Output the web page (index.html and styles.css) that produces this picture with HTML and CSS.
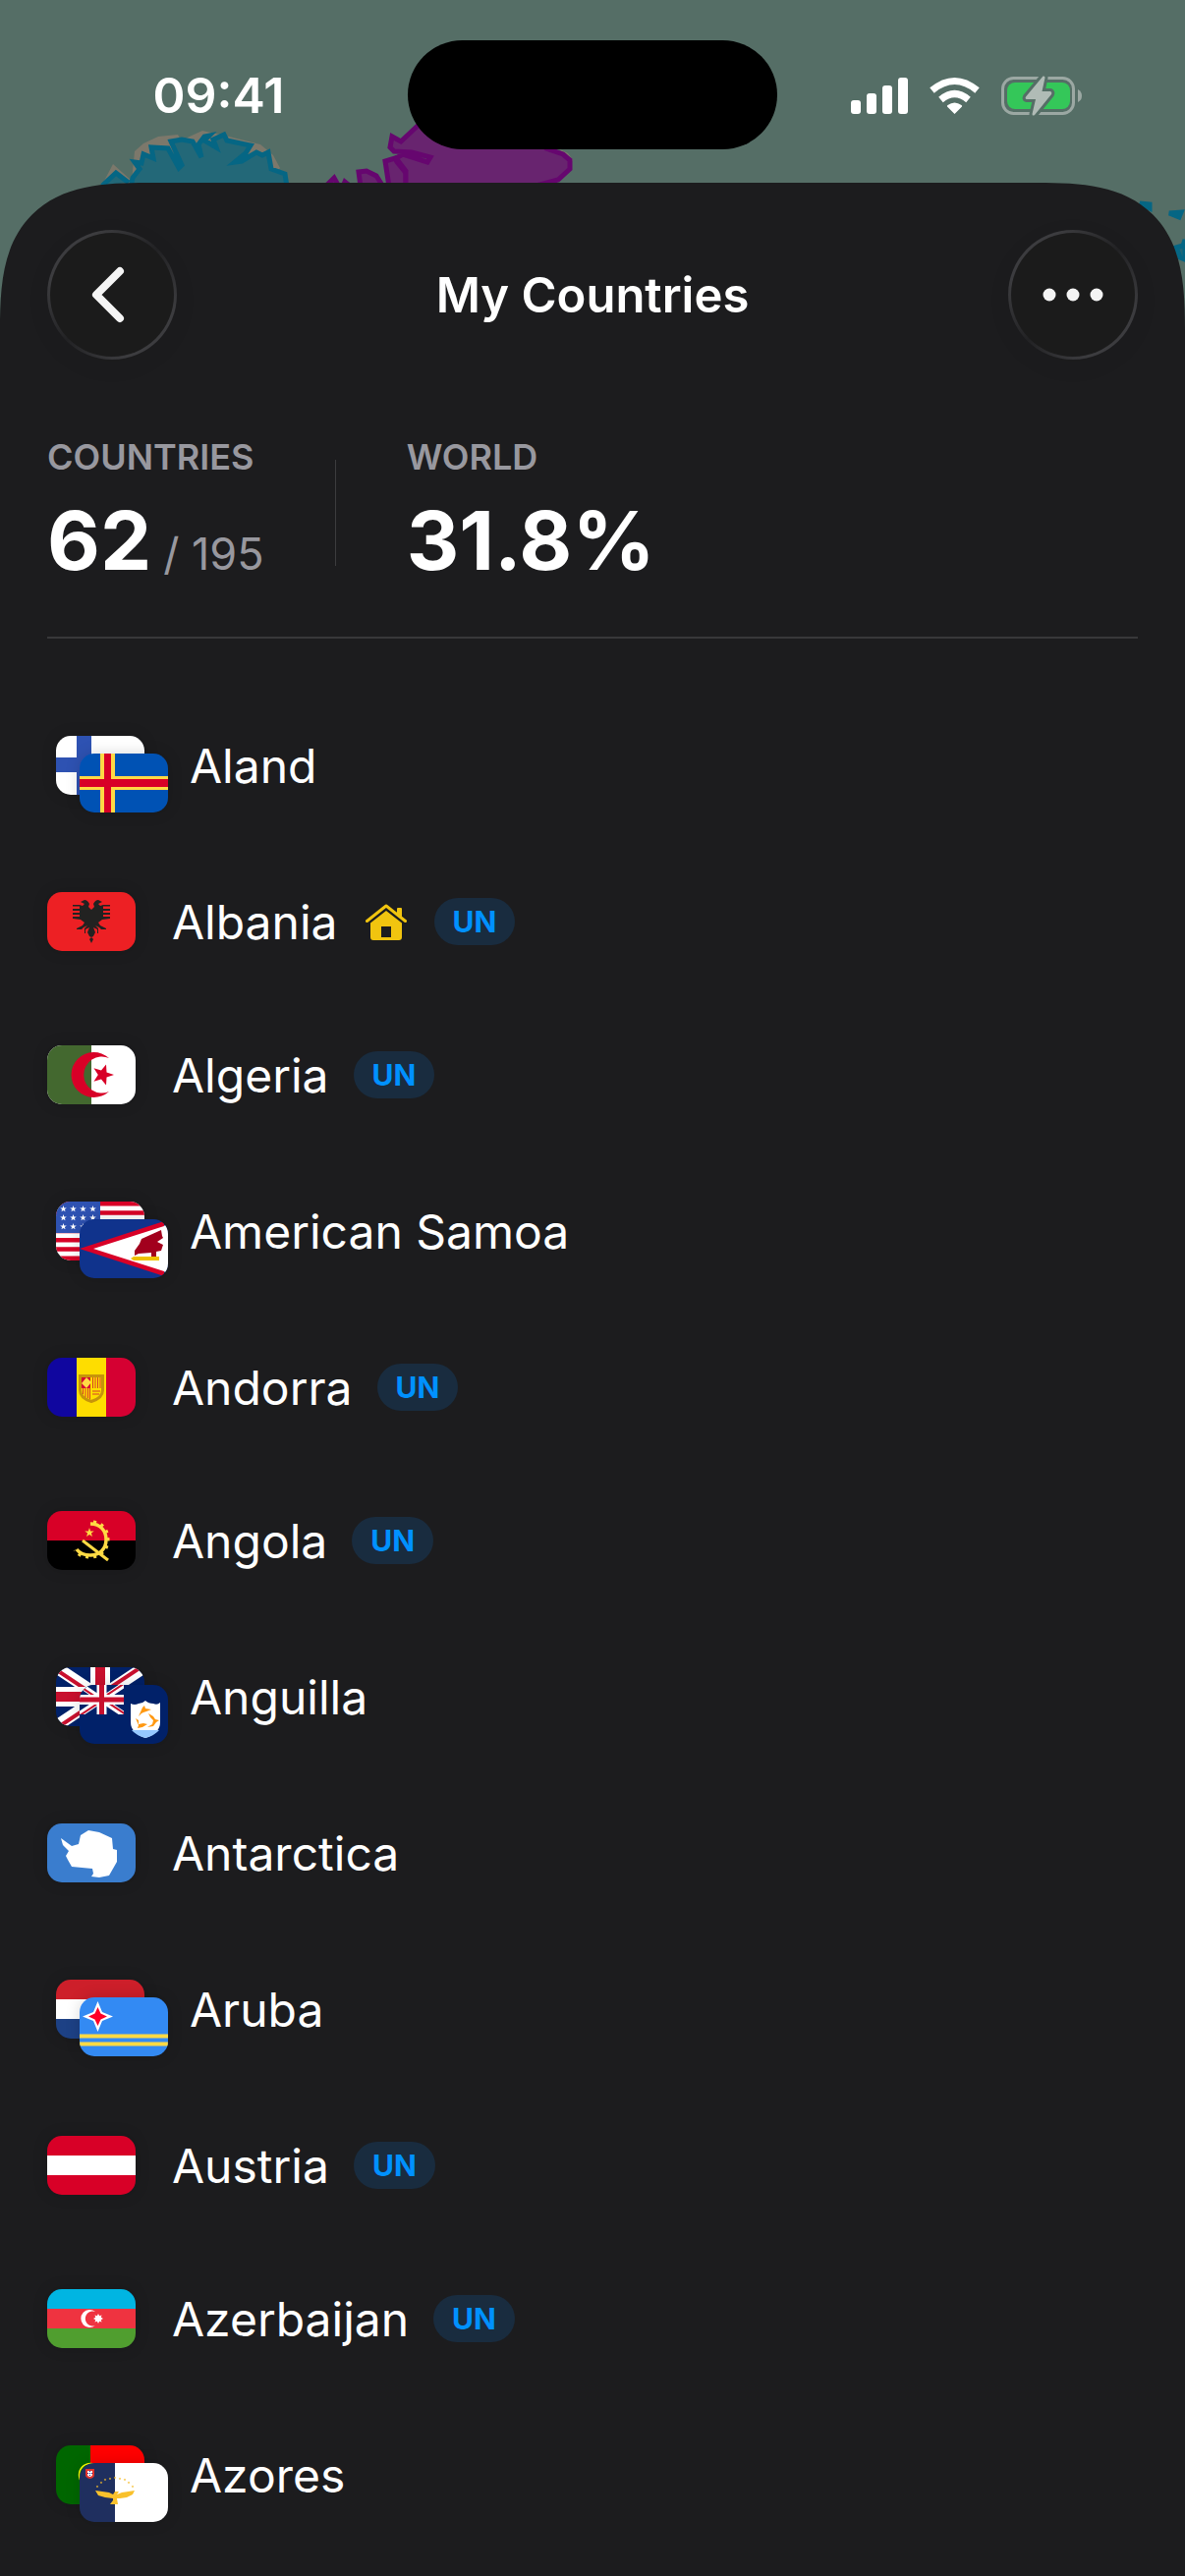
FILE: index.html
```html
<!DOCTYPE html>
<html lang="en">
<head>
<meta charset="utf-8">
<meta name="viewport" content="width=device-width, initial-scale=1">
<title>My Countries</title>
<link rel="stylesheet" href="styles.css">
</head>
<body>
<svg width="0" height="0" class="defs" aria-hidden="true">
  <defs>
    <clipPath id="jack-box"><path d="M0 0H90V60H0z"/></clipPath>
    <clipPath id="jack-saltire"><path d="M45 30H90V60zM45 30V60H0zM45 30H0V0zM45 30V0H90z"/></clipPath>
    <symbol id="jack" viewBox="0 0 90 60" preserveAspectRatio="none">
      <g clip-path="url(#jack-box)">
        <path fill="#012169" d="M0 0H90V60H0z"/>
        <path stroke="#fff" stroke-width="12" d="M0 0L90 60M90 0L0 60"/>
        <path stroke="#c8102e" stroke-width="8" clip-path="url(#jack-saltire)" d="M0 0L90 60M90 0L0 60"/>
        <path stroke="#fff" stroke-width="20" d="M45 0V60M0 30H90"/>
        <path stroke="#c8102e" stroke-width="10" d="M45 0V60M0 30H90"/>
      </g>
    </symbol>
    <symbol id="star" viewBox="-10 -10 20 20"><path fill="currentColor" d="M0-10L2.3-3.2L9.5-3.1L3.8 1.2L5.9 8.1L0 4L-5.9 8.1L-3.8 1.2L-9.5-3.1L-2.3-3.2z"/></symbol>
  </defs>
</svg>

<svg class="map" viewBox="0 0 1206 400" aria-hidden="true">
  <path fill="#7c786b" d="M104 188L115 167L134 184L137 154L146 146L161 139L181 137L184 143L206 133L233 139L265 147L278 158L285 171L270 190z"/>
  <g fill="#236878" stroke="#056684" stroke-width="5">
    <path d="M104 189L118 176L131 186"/>
    <path d="M133 191L135 181L142 172L137 165L144 166L146 157L156 161L154 150L171 151L182 171L185 168L174 144L185 142L196 144L205 160L202 147L208 139L213 138L208 143L220 150L217 142L228 137L231 143L255 148L250 156L239 165L246 164L261 155L267 158L273 155L276 172L290 177L292 190"/>
    <path d="M1160 207L1170 208L1170 212zM1190 217L1202 216L1200 221zM1197 252L1204 250L1206 244V264L1201 262z"/>
  </g>
  <path fill="#7c786b" d="M570 152L578 156L583 163L578 168z"/>
  <g fill="#68246f" stroke="#66066f" stroke-width="5">
    <path d="M331 190L340 181L345 190M349 190L351 185L357 190M367 190L365 175L373 174L383 179L390 190"/>
    <path d="M396 190L392 164L402 161L404 165L413 176L413 190z"/>
    <path d="M425 128L408 144L399 139L397 150L401 154L419 155L438 160L435 165L410 157L403 161L413 174L413 190H542L568 183L580 172L580 163L573 157L556 151L520 110z"/>
  </g>
</svg>

<header class="status">
  <time class="clock">09:41</time>
  <div class="island"></div>
  <svg class="indicators" width="236" height="42" viewBox="865 76 236 42" role="img" aria-label="Signal, Wi-Fi, charging">
    <g fill="#fff">
      <rect x="865" y="102" width="10" height="14" rx="3"/>
      <rect x="881" y="95" width="10" height="21" rx="3"/>
      <rect x="897" y="87" width="10" height="29" rx="3"/>
      <rect x="913" y="79" width="10" height="37" rx="3"/>
      <path d="M970.500 116L963 108.500Q962.500 107.500 963.500 107Q970.500 102 977.500 107Q978.500 107.500 978 108.500z"/>
    </g>
    <g fill="none" stroke="#fff" stroke-width="7">
      <path d="M956.500 101.500Q970.500 89.500 984.500 101.500"/>
      <path d="M947.500 92Q970.500 73 993.500 92"/>
    </g>
    <rect x="1019.500" y="79.500" width="72" height="36" rx="11" fill="none" stroke="#9ba8a3" stroke-width="3"/>
    <path fill="#9ba8a3" d="M1096 91Q1100 93 1100 97.500Q1100 102 1096 104z"/>
    <rect x="1024" y="84" width="64" height="27" rx="8" fill="#34c759"/>
    <path fill="#b0bbb6" stroke="#556e66" stroke-width="6" stroke-linejoin="round" paint-order="stroke" d="M1060.500 77.500Q1062.500 77 1062.500 79L1059.500 93H1068Q1070 94 1069 96L1052 117Q1049.500 118.500 1049.500 116L1053 101H1043.500Q1042 100.500 1043 98.500z"/>
  </svg>
</header>

<main class="sheet">
  <div class="titlebar">
    <button class="round" type="button" aria-label="Back">
      <svg width="40" height="64" viewBox="0 0 40 64"><path d="M32 8L8 32L32 56" fill="none" stroke="#f4f4f4" stroke-width="8" stroke-linecap="round" stroke-linejoin="round"/></svg>
    </button>
    <h1>My Countries</h1>
    <button class="round" type="button" aria-label="More">
      <svg width="64" height="16" viewBox="0 0 64 16" fill="#f4f4f4"><circle cx="8" cy="8" r="6.500"/><circle cx="32" cy="8" r="6.500"/><circle cx="56" cy="8" r="6.500"/></svg>
    </button>
  </div>

  <dl class="stats">
    <div class="stat"><dt>COUNTRIES</dt><dd>62<small>/ 195</small></dd></div>
    <div class="rule"></div>
    <div class="stat"><dt>WORLD</dt><dd>31.8%</dd></div>
  </dl>

  <ul class="countries">
    <li class="territory">
      <div class="pair">
        <svg class="flag" viewBox="0 0 90 60"><path fill="#fff" d="M0 0H90V60H0z"/><path fill="#2e52b2" d="M21 0H36V22H90V37H36V60H21V37H0V22H21z"/></svg>
        <svg class="flag" viewBox="0 0 90 60"><path fill="#0052b4" d="M0 0H90V60H0z"/><path fill="#ffda44" d="M21 0H36V23H90V37H36V60H21V37H0V23H21z"/><path fill="#d80027" d="M25 0H32V26H90V34H32V60H25V34H0V26H25z"/></svg>
      </div>
      <span class="name">Aland</span>
    </li>
    <li>
      <svg class="flag" viewBox="0 0 90 60"><path fill="#ed2024" d="M0 0H90V60H0z"/><path fill="#222221" d="M45 18L42 15L43 12Q41 8 38 8L34 10L38 12L36 14L33 13V16L37 18H41V18L37 17L33 13H26V14.500H33V17H26V19H33V21H26V23H33V25H26V27L34 28L38 31L36 34L30 37V38H35L37 36L41 34L38 37V42H39V38L43 36L41 41L43 45L45 46L43 48L45 52L47 48L45 46L47 45L49 41L47 36L51 38V42H52V37L49 34L53 36L55 38H60V37L54 34L52 31L56 28L64 27V25H57V23H64V21H57V19H64V17H57V14.500H64V13H57L53 17L49 18L53 18L57 16V13L54 14L52 12L56 10L52 8Q49 8 47 12L48 15z"/></svg>
      <span class="name">Albania</span>
      <svg class="home" width="42" height="38" viewBox="0 0 42 38" role="img" aria-label="Home country"><path fill="none" stroke="#f1c40f" stroke-width="3" stroke-linecap="round" stroke-linejoin="round" d="M1.500 17.500L21 2L40.500 17.500"/><path fill="#f1c40f" d="M32 5Q32 4 33 4H36Q37 4 37 5V14L32 10zM5 19.500L21 7L37 19.500V34Q37 37 34 37H8Q5 37 5 34zM16 23V34H26V23z" fill-rule="evenodd"/></svg>
      <span class="badge">UN</span>
    </li>
    <li>
      <svg class="flag" viewBox="0 0 90 60"><path fill="#fff" d="M0 0H90V60H0z"/><path fill="#43682f" d="M0 0H45V60H0z"/><path fill="#d80027" d="M63 13A23 23 0 1 0 63 47A18.500 18.500 0 1 1 63 13zM68 30L60.500 32.600L60 40.600L55 34.400L47.500 36.700L51.800 30L47.500 23.300L55 25.600L60 19.400L60.500 27.400z"/></svg>
      <span class="name">Algeria</span>
      <span class="badge">UN</span>
    </li>
    <li class="territory">
      <div class="pair">
        <svg class="flag" viewBox="0 0 90 60"><path fill="#fff" d="M0 0H90V60H0z"/><path fill="none" stroke="#d80027" stroke-width="4.600" d="M0 2.300H90M0 11.500H90M0 20.800H90M0 30H90M0 39.200H90M0 48.500H90M0 57.700H90"/><path fill="#2e52b2" d="M0 0H45V32H0z"/>
          <g color="#fff"><use href="#star" x="4" y="4" width="7" height="7"/><use href="#star" x="14" y="4" width="7" height="7"/><use href="#star" x="24" y="4" width="7" height="7"/><use href="#star" x="34" y="4" width="7" height="7"/><use href="#star" x="4" y="13" width="7" height="7"/><use href="#star" x="14" y="13" width="7" height="7"/><use href="#star" x="24" y="13" width="7" height="7"/><use href="#star" x="34" y="13" width="7" height="7"/><use href="#star" x="4" y="22" width="7" height="7"/><use href="#star" x="14" y="22" width="7" height="7"/><use href="#star" x="24" y="22" width="7" height="7"/></g></svg>
        <svg class="flag" viewBox="0 0 90 60"><path fill="#10338c" d="M0 0H90V60H0z"/><path fill="#d80027" d="M0 30L86 2V58z"/><path fill="#fff" d="M14 30L86 7L90 3V57L86 53z"/><path fill="#a2001d" d="M56 37V32L61 25L63 20L83 11L84 17L85 19L79 23L85 26L83 32L78 33V38H73V34L60 35z"/><path fill="#efc100" d="M52 40L55 38H81V42H55z"/></svg>
      </div>
      <span class="name">American Samoa</span>
    </li>
    <li>
      <svg class="flag" viewBox="0 0 90 60"><path fill="#10069f" d="M0 0H30V60H0z"/><path fill="#fedd00" d="M30 0H60V60H30z"/><path fill="#d50032" d="M60 0H90V60H60z"/><path fill="#fedd00" stroke="#c6940a" stroke-width="3" d="M33.500 18.500H56.500V33Q56.500 41 45 44.500Q33.500 41 33.500 33z"/><path fill="#d50032" d="M35 20H44V31H35z"/><path fill="#ffda44" d="M40 20L45 25L40 31L35 26z"/><path fill="none" stroke="#d5402a" stroke-width="1" d="M46.500 20V31M49 20V31M51.500 20V31M54 20V31M36.500 31V37M39 31V40M41.500 31V41M43.500 31V42M46 34H54M46 37H53"/></svg>
      <span class="name">Andorra</span>
      <span class="badge">UN</span>
    </li>
    <li>
      <svg class="flag" viewBox="0 0 90 60"><path fill="#d80027" d="M0 0H90V30H0z"/><path d="M0 30H90V60H0z"/><g fill="none" stroke="#ffda44"><path stroke-width="3.500" d="M44 13C54 13 60 20 60 29C60 39 53 45 44 45C38 45 33 43 30 39"/><path stroke-width="3" stroke-dasharray="3 5" d="M47 11C57 12 62 20 62 29C62 40 54 47 44 47C37 47 31 45 28 40"/><path stroke-width="3" d="M36 30L62 50"/></g><use href="#star" color="#ffda44" x="38" y="17" width="10" height="10"/></svg>
      <span class="name">Angola</span>
      <span class="badge">UN</span>
    </li>
    <li class="territory">
      <div class="pair">
        <svg class="flag" viewBox="0 0 90 60"><use href="#jack" width="90" height="60"/></svg>
        <svg class="flag" viewBox="0 0 90 60"><path fill="#012169" d="M0 0H90V60H0z"/><use href="#jack" width="45" height="30"/><path fill="#fff" d="M52 19Q56 21 60 19Q64 19 67 16Q70 19 75 19Q79 21 82 18V38Q82 49 67 54Q52 49 52 38z"/><path fill="#96c8ff" d="M53 46H81Q77 51 67 54Q57 51 53 46z"/><path fill="#ff9811" d="M60 32L64 23L66 21L67 24L73 25L68 27L65 28L63 29zM57 34L60 36L60 40L65 39L69 40L64 43L59 44L60 41zM70 29L75 32L77 35L81 36L78 38L75 42L69 43L74 40L75 36L72 33z"/></svg>
      </div>
      <span class="name">Anguilla</span>
    </li>
    <li>
      <svg class="flag" viewBox="0 0 90 60"><path fill="#3a7dce" d="M0 0H90V60H0z"/><path fill="#fff" d="M14 15L25 23L32 21L34 12L42 7L53 9L66 15L67 26L71 27V39L63 53L53 55L45 54L47 51L46 46L25 44L21 37L19 33L22 28L16 22z"/></svg>
      <span class="name">Antarctica</span>
    </li>
    <li class="territory">
      <div class="pair">
        <svg class="flag" viewBox="0 0 90 60"><path fill="#cd1f2a" d="M0 0H90V20H0z"/><path fill="#fff" d="M0 20H90V40H0z"/><path fill="#1d4185" d="M0 40H90V60H0z"/></svg>
        <svg class="flag" viewBox="0 0 90 60"><path fill="#338af3" d="M0 0H90V60H0z"/><path fill="#ffda44" d="M0 37.500H90V41.500H0zM0 45.500H90V49.500H0z"/><path fill="#fff" d="M18.500 4L23 15L34 19.500L23 24L18.500 35L14 24L3 19.500L14 15z"/><path fill="#ff0028" d="M18.500 10L21.500 16.500L28 19.500L21.500 22.500L18.500 29L15.500 22.500L9 19.500L15.500 16.500z"/></svg>
      </div>
      <span class="name">Aruba</span>
    </li>
    <li>
      <svg class="flag" viewBox="0 0 90 60"><path fill="#d80027" d="M0 0H90V60H0z"/><path fill="#fff" d="M0 20H90V40H0z"/></svg>
      <span class="name">Austria</span>
      <span class="badge">UN</span>
    </li>
    <li>
      <svg class="flag" viewBox="0 0 90 60"><path fill="#00b5e2" d="M0 0H90V20H0z"/><path fill="#ef3340" d="M0 20H90V40H0z"/><path fill="#509e2f" d="M0 40H90V60H0z"/><path fill="#fff" d="M49 23A9 9 0 1 0 49 37A7.500 7.500 0 1 1 49 23zM52 25L53.200 27.200L55.500 26.500L54.800 28.800L57 30L54.800 31.200L55.500 33.500L53.200 32.800L52 35L50.800 32.800L48.500 33.500L49.200 31.200L47 30L49.200 28.800L48.500 26.500L50.800 27.200z"/></svg>
      <span class="name">Azerbaijan</span>
      <span class="badge">UN</span>
    </li>
    <li class="territory">
      <div class="pair">
        <svg class="flag" viewBox="0 0 90 60"><path fill="#060" d="M0 0H35V60H0z"/><path fill="red" d="M35 0H90V60H35z"/><circle cx="35" cy="30" r="11.500" fill="none" stroke="#ff0" stroke-width="1.500"/></svg>
        <svg class="flag" viewBox="0 0 90 60"><path fill="#1f2f5f" d="M0 0H36V60H0z"/><path fill="#fff" d="M36 0H90V60H36z"/><path fill="#e0342c" d="M6 6H15V12Q15 15 10.500 16Q6 15 6 12z"/><path fill="#fff" d="M8 8H13V12Q13 13.500 10.500 14Q8 13.500 8 12z"/><path fill="none" stroke="#1f2f9f" stroke-width="1" stroke-dasharray="1 1" d="M10.500 8V14M8 10.500H13"/><g color="#f5bd2a"><use href="#star" x="16.500" y="22.500" width="3" height="3"/><use href="#star" x="20.500" y="18.500" width="3" height="3"/><use href="#star" x="24.500" y="15.500" width="3" height="3"/><use href="#star" x="29.500" y="14.500" width="3" height="3"/><use href="#star" x="34.500" y="13.500" width="3" height="3"/><use href="#star" x="39.500" y="14.500" width="3" height="3"/><use href="#star" x="44.500" y="15.500" width="3" height="3"/><use href="#star" x="48.500" y="18.500" width="3" height="3"/><use href="#star" x="52.500" y="22.500" width="3" height="3"/></g><path fill="#f9c12c" d="M16 28L30 30L34 32L36 29L40 29L38 32L43 30L56 28L54 32L48 35L41 36L38 36L39 42H31L34 38V36L26 35L19 33z"/></svg>
      </div>
      <span class="name">Azores</span>
    </li>
  </ul>
</main>
</body>
</html>
```
FILE: styles.css
```css
* {
  box-sizing: border-box;
}

body {
  margin: 0;
  min-height: 100vh;
  display: flex;
  flex-direction: column;
  background: #556e66;
  color: #fff;
  font-family: Inter, "Liberation Sans", sans-serif;
  font-size: 48px;
}

.defs {
  position: absolute;
}

/* The map lies behind the status bar and the sheet's corners */
.map {
  position: absolute;
  top: 0;
  left: 0;
  width: 100%;
  z-index: -1;
}

.status {
  display: grid;
  grid-template-columns: 1fr 376px 1fr;
  align-items: center;
  justify-items: center;
  padding: 41px 30px 34px;
}

.clock {
  font-size: 50px;
  font-weight: 600;
}

.island {
  width: 100%;
  height: 111px;
  border-radius: 56px;
  background: #000;
}

.sheet {
  flex: 1;
  padding-top: 48px;
  background: #1c1c1e;
  border-radius: 114px 114px 0 0;
}

@supports (corner-shape: squircle) {
  .sheet {
    border-radius: 150px 150px 0 0;
    corner-shape: superellipse(1.5);
  }
}

.titlebar {
  display: flex;
  align-items: center;
  justify-content: space-between;
  padding: 0 48px;
}

.titlebar h1 {
  margin: 0;
  font-size: 49px;
  font-weight: 600;
}

.round {
  display: flex;
  align-items: center;
  justify-content: center;
  width: 132px;
  height: 132px;
  padding: 0;
  border: 3px solid transparent;
  border-radius: 50%;
  background:
    linear-gradient(#1b1b1b, #1b1b1b) padding-box,
    linear-gradient(135deg, #3c3c3f 20%, #222224 50%, #3c3c3f 80%) border-box;
  box-shadow: 0 6px 24px rgba(0, 0, 0, 0.06);
}

.round svg {
  flex: none;
}

.round:first-child svg {
  margin-right: 8px;
}

.stats {
  display: flex;
  align-items: center;
  gap: 72px;
  margin: 77px 48px 49px;
  padding-bottom: 48px;
  border-bottom: 2px solid #38383a;
}

.stat {
  display: grid;
  gap: 13px;
}

.stat dt {
  color: #98989f;
  font-size: 36px;
  font-weight: 600;
  line-height: 44px;
}

.stat dd {
  margin: 0;
  font-size: 83px;
  font-weight: 700;
  line-height: 100px;
  white-space: nowrap;
}

.stat small {
  margin-left: 12px;
  color: #98989f;
  font-size: 45px;
  font-weight: 400;
  line-height: 1;
}

.rule {
  width: 1px;
  height: 108px;
  background: #3c3c3e;
}

.countries {
  margin: 0;
  padding: 0;
  list-style: none;
}

.countries li {
  display: flex;
  align-items: flex-start;
  padding: 47px 48px;
}

.countries .territory {
  padding: 50px 57px 34px;
}

.flag {
  display: block;
  flex: none;
  width: 90px;
  height: 60px;
  border-radius: 15px;
  box-shadow: 0 0 15px rgba(0, 0, 0, 0.15);
}

/* The territory's flag overlaps that of its sovereign state */
.pair {
  display: grid;
  grid-template: 18px 60px / 24px 90px;
}

.pair .flag:first-child {
  grid-area: 1 / 1;
}

.pair .flag:last-child {
  grid-area: 2 / 2;
}

.name {
  margin-left: 37px;
  line-height: 62px;
}

.territory .name {
  margin-left: 22px;
}

.home {
  margin: 12px 3px 0 28px;
}

.badge {
  margin: 6px 0 0 25px;
  padding: 0 19px;
  border-radius: 24px;
  background: #192c3f;
  color: #0091ff;
  font-size: 30px;
  font-weight: 700;
  line-height: 48px;
}
```
